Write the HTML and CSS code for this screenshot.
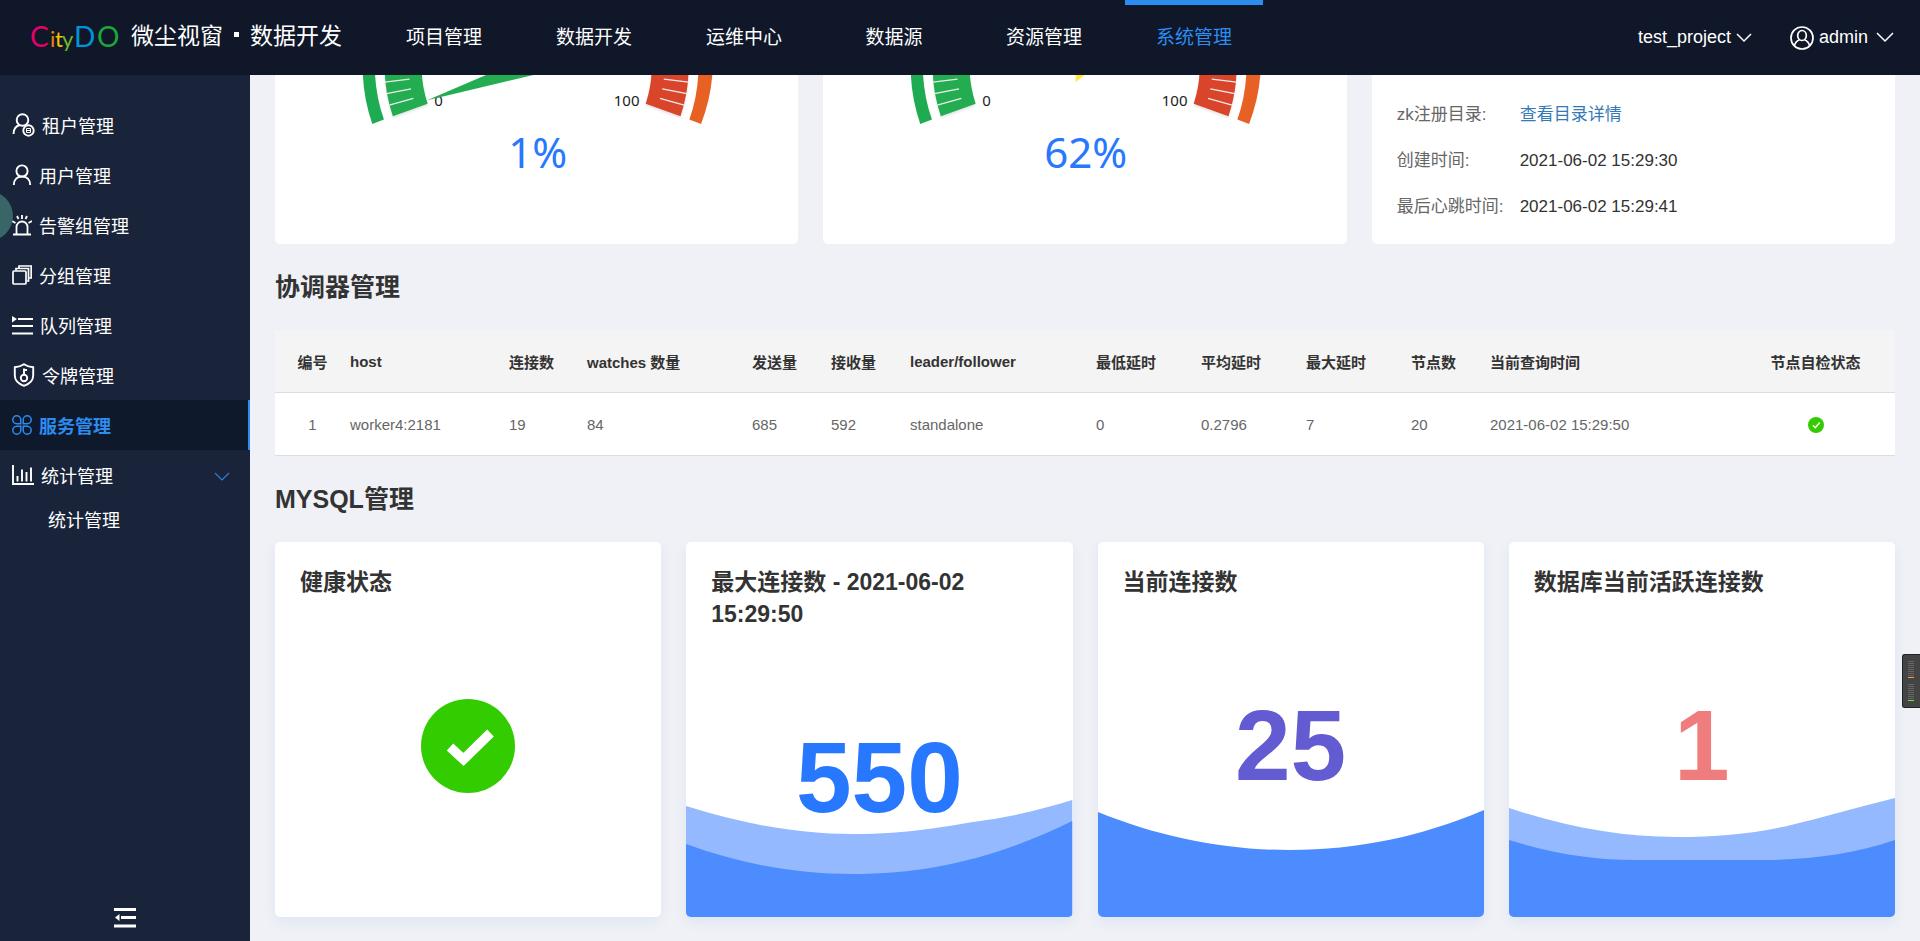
FILE: index.html
```html
<!DOCTYPE html>
<html lang="zh-CN">
<head>
<meta charset="utf-8">
<title>微尘视窗 · 数据开发</title>
<link rel="stylesheet" href="styles.css">
</head>
<body>
<div class="app">
  <header class="header">
    <div class="brand">
      <svg class="logo" width="96" height="48" viewBox="-4 -7 96 48" role="img" aria-label="CityDO">
        <text class="logo-big" y="26"><tspan x="-1" fill="#e5006a">C</tspan><tspan x="43" fill="#0095db">D</tspan><tspan x="66" fill="#1aa83c">O</tspan></text>
        <text class="logo-small" y="26"><tspan x="19" fill="#ef8200">i</tspan><tspan x="24" fill="#f8c400">t</tspan><tspan x="31" fill="#6fba2c">y</tspan></text>
      </svg>
      <span class="brand-name">微尘视窗</span><span class="brand-dot"></span><span class="brand-name">数据开发</span>
    </div>
    <nav class="nav">
      <a class="nav-item" href="#">项目管理</a>
      <a class="nav-item" href="#">数据开发</a>
      <a class="nav-item" href="#">运维中心</a>
      <a class="nav-item" href="#">数据源</a>
      <a class="nav-item" href="#">资源管理</a>
      <a class="nav-item nav-item-active" href="#">系统管理</a>
    </nav>
    <div class="tools">
      <button class="tool" type="button">test_project
        <svg width="16" height="10" viewBox="0 0 16 10"><path d="M1 1l7 7 7-7" fill="none" stroke="#fff" stroke-width="1.5"/></svg>
      </button>
      <button class="tool" type="button">
        <svg width="24" height="24" viewBox="0 0 24 24" fill="none" stroke="#fff" stroke-width="1.7"><circle cx="12" cy="12" r="11"/><ellipse cx="12" cy="9.500" rx="4.300" ry="5"/><path d="M4.500 19.500c1-3.500 3-5 5-5.500M19.500 19.500c-1-3.500-3-5-5-5.500"/></svg>
        admin
        <svg class="tool-caret" width="18" height="11" viewBox="0 0 18 11"><path d="M1 1l8 8 8-8" fill="none" stroke="#fff" stroke-width="1.500"/></svg>
      </button>
    </div>
  </header>

  <div class="body">
    <aside class="sidebar">
      <nav class="menu">
        <a class="menu-item" href="#">
          <svg width="23" height="24" viewBox="0 0 23 24" fill="none" stroke="#fff" stroke-width="1.900"><circle cx="10.500" cy="7" r="5.800"/><path d="M1.500 21c0-5 3-8.200 6.500-9"/><circle cx="16.500" cy="17.500" r="5.200"/><path d="M14.500 15.500h4v4h-4zM14.500 17.500h4" stroke-width="1"/></svg>
          租户管理</a>
        <a class="menu-item" href="#">
          <svg width="20" height="22" viewBox="0 0 20 22" fill="none" stroke="#fff" stroke-width="1.900"><circle cx="10" cy="7" r="5.600"/><path d="M1.800 21c0-5.500 3.500-8.500 8.200-8.500s8.200 3 8.200 8.500"/></svg>
          用户管理</a>
        <a class="menu-item" href="#">
          <svg width="20" height="22" viewBox="0 0 20 22" fill="none" stroke="#fff" stroke-width="1.800"><path d="M1 20.500h18M4.500 20v-7a5.500 5.500 0 0 1 11 0v7M10 1v4M5 2l1.500 3M15 2l-1.500 3M0 7l3.500 2M20 7l-3.500 2"/></svg>
          告警组管理</a>
        <a class="menu-item" href="#">
          <svg width="20" height="20" viewBox="0 0 20 20" fill="none" stroke="#fff" stroke-width="1.700"><rect x="1" y="6" width="13" height="13" rx="1"/><path d="M4 5.500V3.500h12.500V16H15M7 3V1h12.200v12H17"/></svg>
          分组管理</a>
        <a class="menu-item" href="#">
          <svg width="21" height="20" viewBox="0 0 21 20"><path d="M0 1l5 3-5 3.500z" fill="#fff"/><path d="M6 4h15M0 11h21M0 18.500h21" stroke="#fff" stroke-width="2"/></svg>
          队列管理</a>
        <a class="menu-item" href="#">
          <svg width="23" height="24" viewBox="0 0 23 24" fill="none" stroke="#fff" stroke-width="1.900"><path d="M12 1.200c3 2 6 2.800 9.200 3v8.300c0 5-4 8.500-9.200 10.300C6.800 21 2.800 17.500 2.800 12.500V4.200C6 4 9 3.200 12 1.200z"/><circle cx="12" cy="15" r="3.200"/><path d="M12 12V5.500M12 7h3"/></svg>
          令牌管理</a>
        <a class="menu-item menu-item-active" href="#">
          <svg width="20" height="20" viewBox="0 0 20 20" fill="none" stroke="#2d8cf0" stroke-width="1.500"><path d="M8.800 8.800H4.700a4 4 0 1 1 4.100-4.100zM11.200 8.800V4.700a4 4 0 1 1 4.100 4.100zM8.800 11.200v4.100a4 4 0 1 1-4.100-4.100zM11.200 11.200h4.100a4 4 0 1 1-4.100 4.100z"/></svg>
          服务管理</a>
        <a class="menu-item" href="#">
          <svg width="22" height="20" viewBox="0 0 22 20" fill="none" stroke="#fff" stroke-width="1.900"><path d="M1 0v19h21M5.500 16.500V11M10 16.500V4.500M14.500 16.500V7M19 16.500V2.500"/></svg>
          统计管理
          <svg class="menu-caret" width="16" height="10" viewBox="0 0 16 10"><path d="M1 1l7 7 7-7" fill="none" stroke="#2d7fd6" stroke-width="1.200"/></svg></a>
        <a class="menu-sub" href="#">统计管理</a>
      </nav>
      <button class="collapse" type="button" aria-label="收起菜单">
        <svg width="22" height="22" viewBox="0 0 22 22"><path d="M0 2.500h22M7 10.500h15M0 19h22" stroke="#fff" stroke-width="3"/><path d="M1 10.500L5.500 7v7z" fill="#fff"/></svg>
      </button>
      <div class="bubble"></div>
    </aside>

    <main class="content">
      <div class="gauges">
        <section class="card gauge-card">
          <svg class="gauge" viewBox="0 0 522 169">
            <path d="M87-5A175 175 0 0 0 96.600 48.900L108.300 44.600A162.500 162.500 0 0 1 99.200-5z" fill="#1fab51"/>
            <path d="M437-5A175 175 0 0 1 425.400 48.900L413.700 44.600A162.500 162.500 0 0 0 422.800-5z" fill="#e86124"/>
            <path class="edge" d="M109-5A153 153 0 0 0 117.200 41.300L152 28.700A116 116 0 0 1 146-5z" fill="#23ad50"/>
            <path class="edge" d="M413-5A153 153 0 0 1 404.800 41.300L370 28.700A116 116 0 0 0 376-5z" fill="#d9452b"/>
            <path d="M113.600 30.100l24.100-6.700M110.900 18.700l24.500-4.800M109.100 7.100l24.800-3M408.400 30.100l-24.100-6.700M411.100 18.700l-24.500-4.800M412.900 7.100l-24.800-3" stroke="#eee" stroke-width="1.200"/>
            <text class="tick" x="163" y="31">0</text>
            <text class="tick" x="351" y="31">100</text>
            <path d="M151.500 25.300L258-20.500 264-1.500z" fill="#23ad50"/>
            <text class="gauge-value" x="262" y="93">1%</text>
          </svg>
        </section>
        <section class="card gauge-card">
          <svg class="gauge" viewBox="0 0 522 169">
            <path d="M87-5A175 175 0 0 0 96.600 48.900L108.300 44.600A162.500 162.500 0 0 1 99.200-5z" fill="#1fab51"/>
            <path d="M437-5A175 175 0 0 1 425.400 48.900L413.700 44.600A162.500 162.500 0 0 0 422.800-5z" fill="#e86124"/>
            <path class="edge" d="M109-5A153 153 0 0 0 117.200 41.300L152 28.700A116 116 0 0 1 146-5z" fill="#23ad50"/>
            <path class="edge" d="M413-5A153 153 0 0 1 404.800 41.300L370 28.700A116 116 0 0 0 376-5z" fill="#d9452b"/>
            <path d="M113.600 30.100l24.100-6.700M110.900 18.700l24.500-4.800M109.100 7.100l24.800-3M408.400 30.100l-24.100-6.700M411.100 18.700l-24.500-4.800M412.900 7.100l-24.800-3" stroke="#eee" stroke-width="1.200"/>
            <text class="tick" x="163" y="31">0</text>
            <text class="tick" x="351" y="31">100</text>
            <path d="M252 7L270-6.600 252-15z" fill="#ffe83b"/>
            <text class="gauge-value" x="262" y="93">62%</text>
          </svg>
        </section>
        <section class="card info-card">
          <dl class="info">
            <dt>zk注册目录:</dt><dd><a class="link" href="#">查看目录详情</a></dd>
            <dt>创建时间:</dt><dd>2021-06-02 15:29:30</dd>
            <dt>最后心跳时间:</dt><dd>2021-06-02 15:29:41</dd>
          </dl>
        </section>
      </div>

      <h2 class="section-title">协调器管理</h2>
      <table class="table">
        <colgroup><col class="c-no"><col class="c-host"><col class="c-conn"><col class="c-watch"><col class="c-count"><col class="c-count"><col class="c-leader"><col class="c-delay"><col class="c-delay"><col class="c-delay"><col class="c-count"><col class="c-time"><col class="c-state"></colgroup>
        <thead>
          <tr><th class="center">编号</th><th>host</th><th>连接数</th><th>watches 数量</th><th>发送量</th><th>接收量</th><th>leader/follower</th><th>最低延时</th><th>平均延时</th><th>最大延时</th><th>节点数</th><th>当前查询时间</th><th class="center">节点自检状态</th></tr>
        </thead>
        <tbody>
          <tr><td class="center">1</td><td>worker4:2181</td><td>19</td><td>84</td><td>685</td><td>592</td><td>standalone</td><td>0</td><td>0.2796</td><td>7</td><td>20</td><td>2021-06-02 15:29:50</td><td class="center"><svg class="state" width="16" height="16" viewBox="0 0 94 94" role="img" aria-label="正常"><circle cx="47" cy="47" r="47" fill="#3c0"/><path d="M29 49l14 14 26-30" fill="none" stroke="#fff" stroke-width="9"/></svg></td></tr>
        </tbody>
      </table>

      <h2 class="section-title">MYSQL管理</h2>
      <div class="stats">
        <section class="card stat">
          <h3 class="stat-title">健康状态</h3>
          <svg class="health" width="94" height="94" viewBox="0 0 94 94" role="img" aria-label="正常"><circle cx="47" cy="47" r="47" fill="#3c0"/><path d="M29 48L42.500 60.500 69.500 34" fill="none" stroke="#fff" stroke-width="9.500" stroke-linejoin="miter"/></svg>
        </section>
        <section class="card stat">
          <svg class="wave" viewBox="0 0 386 375" preserveAspectRatio="none"><path d="M0 264C60 283 115 292 166 292C225 292 260 284 300 278C330 274 360 266 386 258V375H0z" fill="#94b9ff"/><path d="M0 302C55 322 110 332 166 332C245 332 315 314 386 279V375H0z" fill="#4d8cff"/></svg>
          <h3 class="stat-title">最大连接数 - 2021-06-02 15:29:50</h3>
          <p class="number number-blue">550</p>
        </section>
        <section class="card stat">
          <svg class="wave" viewBox="0 0 386 375" preserveAspectRatio="none"><path d="M0 270C62 295 125 308 192 308C260 308 322 295 386 268V375H0z" fill="#4d8cff"/></svg>
          <h3 class="stat-title">当前连接数</h3>
          <p class="number number-purple">25</p>
        </section>
        <section class="card stat">
          <svg class="wave" viewBox="0 0 386 375" preserveAspectRatio="none"><path d="M0 266C60 286 115 295 167 295C210 295 240 292 278 284C316 275 346 266 386 256V375H0z" fill="#94b9ff"/><path d="M0 298C45 312 85 318 128 318H256C300 318 345 312 386 298V375H0z" fill="#4d8cff"/></svg>
          <h3 class="stat-title">数据库当前活跃连接数</h3>
          <p class="number number-red">1</p>
        </section>
      </div>
    </main>
  </div>
  <div class="meter">
    <div class="meter-bars meter-orange"></div>
    <div class="meter-bars meter-green"></div>
  </div>
</div>
</body>
</html>
```
FILE: styles.css
```css
* {
  box-sizing: border-box;
}

body {
  margin: 0;
  background: #eff1f6;
  color: #333;
  font-family: "Liberation Sans", "Noto Sans CJK SC", sans-serif;
  font-size: 18px;
}

a {
  color: inherit;
  text-decoration: none;
}

button {
  border: 0;
  padding: 0;
  background: none;
  color: inherit;
  font: inherit;
}

svg {
  flex: none;
}

.app {
  display: flex;
  flex-direction: column;
  height: 100vh;
  overflow: hidden;
}

.header {
  display: flex;
  flex: none;
  height: 75px;
  background: #0f1729;
  color: #fff;
}

.brand {
  display: flex;
  align-items: center;
  width: 375px;
  padding-left: 27px;
}

.logo {
  margin-right: 8px;
}

.logo-big {
  font: 28px Lato, sans-serif;
}

.logo-small {
  font: 22px Lato, sans-serif;
}

.brand-name {
  font-size: 23px;
  line-height: 34px;
  padding-bottom: 3px;
}

.brand-dot {
  width: 5px;
  height: 5px;
  margin: 0 11px 6px;
  background: #fff;
}

.nav {
  display: flex;
  gap: 12px;
}

.nav-item {
  width: 138px;
  border-top: 5px solid transparent;
  font-size: 19px;
  line-height: 66px;
  text-align: center;
}

.nav-item-active {
  border-top-color: #2d8cf0;
  color: #2d8cf0;
}

.tools {
  display: flex;
  align-items: center;
  gap: 38px;
  margin-left: auto;
  padding-right: 26px;
}

.tool {
  display: flex;
  align-items: center;
  gap: 5px;
}

.tool-caret {
  margin-left: 3px;
}

.body {
  display: flex;
  flex: 1;
  min-height: 0;
}

.sidebar {
  position: relative;
  display: flex;
  flex: none;
  flex-direction: column;
  justify-content: space-between;
  width: 250px;
  padding: 25px 0 12px;
  background: #19243a;
  color: #fff;
}

.menu-item {
  display: flex;
  align-items: center;
  gap: 7px;
  height: 50px;
  padding-left: 12px;
}

.menu-item-active {
  border-right: 2px solid #2d8cf0;
  background: #0e1a2b;
  color: #2d8cf0;
  font-weight: bold;
}

.menu-caret {
  margin: 4px 20px 0 auto;
}

.menu-sub {
  display: block;
  padding-left: 48px;
  line-height: 42px;
}

.collapse {
  display: flex;
  justify-content: center;
}

.bubble {
  position: absolute;
  top: 116px;
  left: -37px;
  width: 50px;
  height: 50px;
  border-radius: 50%;
  background: #386668;
}

.content {
  flex: 1;
  min-width: 0;
  padding: 0 25px;
  overflow: hidden;
}

.card {
  border-radius: 5px;
  background: #fff;
  box-shadow: 0 5px 12px rgba(90, 130, 200, 0.1);
}

.gauges {
  display: grid;
  grid-template-columns: repeat(3, 1fr);
  gap: 25px;
}

.gauge-card,
.info-card {
  border-radius: 0 0 5px 5px;
  box-shadow: none;
}

.gauge {
  display: block;
  width: 100%;
  height: 169px;
}

.edge {
  filter: drop-shadow(0 2px 1px rgba(0, 0, 0, 0.1));
}

.tick {
  fill: #222;
  font: 15px "Noto Sans", sans-serif;
  text-anchor: middle;
}

.gauge-value {
  fill: #2878ff;
  font: 42px "Noto Sans", sans-serif;
  text-anchor: middle;
}

.info {
  display: grid;
  grid-template-columns: 123px 1fr;
  row-gap: 22px;
  margin: 0;
  padding: 28px 25px 20px;
  font-size: 17px;
  line-height: 24px;
}

.info dt {
  color: #666;
}

.info dd {
  margin: 0;
}

.link {
  color: #337ab7;
}

.section-title {
  margin: 0;
  padding: 26px 0;
  font-size: 25px;
  line-height: 34px;
}

.table {
  width: 100%;
  border-collapse: separate;
  border-spacing: 0;
  table-layout: fixed;
  background: #fff;
  font-size: 15px;
}

.table th,
.table td {
  height: 63px;
  padding: 0;
  border-bottom: 1px solid #ddd;
  text-align: left;
}

.table th {
  background: #f4f4f4;
}

.table td {
  color: #666;
}

.table .center {
  text-align: center;
}

.state {
  vertical-align: middle;
}

.c-no { width: 75px; }
.c-host { width: 159px; }
.c-conn { width: 78px; }
.c-watch { width: 165px; }
.c-count { width: 79px; }
.c-leader { width: 186px; }
.c-delay { width: 105px; }
.c-time { width: 246px; }
.c-state { width: 159px; }

.stats {
  display: grid;
  grid-template-columns: repeat(4, 1fr);
  gap: 25px;
}

.stat {
  position: relative;
  height: 375px;
  padding: 24px 25px;
  overflow: hidden;
}

.wave {
  position: absolute;
  inset: 0;
  width: 100%;
  height: 100%;
}

.stat-title {
  position: relative;
  margin: 0;
  font-size: 23px;
  line-height: 32px;
}

.health {
  display: block;
  margin: 101px auto 0;
}

.number {
  position: relative;
  margin: 92px 0 0;
  font-size: 100px;
  font-weight: bold;
  line-height: 110px;
  text-align: center;
}

.number-blue { color: #2878ff; }
.number-purple { color: #635bd1; }
.number-red { color: #f07d7d; }

.meter {
  position: fixed;
  top: 654px;
  right: 0;
  display: flex;
  flex-direction: column;
  gap: 6px;
  width: 18px;
  padding: 6px 5px;
  border: 1px solid #222;
  border-right: 0;
  border-radius: 3px 0 0 3px;
  background: #444;
}

.meter-bars {
  width: 6px;
  height: 17px;
  border-bottom: 1px solid;
  background: repeating-linear-gradient(#666 0 1px, transparent 1px 2px);
}

.meter-orange { border-color: #f5a331; }
.meter-green { border-color: #7fe01f; }
```
